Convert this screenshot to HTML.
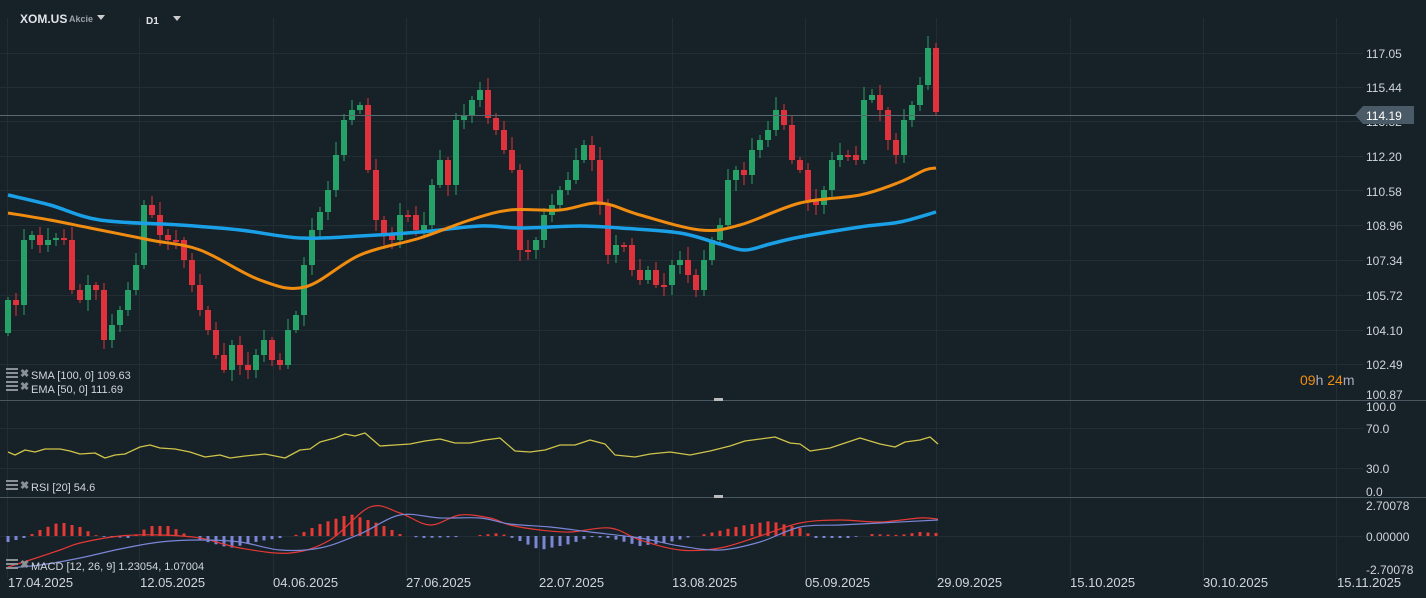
<!DOCTYPE html><html><head><meta charset="utf-8"><style>
body{margin:0;background:#172128;width:1426px;height:598px;overflow:hidden;font-family:"Liberation Sans",sans-serif}
svg{position:absolute;left:0;top:0}
</style></head><body>
<svg id="s" width="1426" height="598" xmlns="http://www.w3.org/2000/svg" font-family="Liberation Sans, sans-serif"></svg>
<script>
const s=document.getElementById('s');let h='';
const L=(x1,y1,x2,y2,c,w=1)=>h+=`<line x1="${x1}" y1="${y1}" x2="${x2}" y2="${y2}" stroke="${c}" stroke-width="${w}"/>`;
const T=(x,y,t,c='#d0d6da',sz=12,a='start',wt='normal')=>h+=`<text x="${x}" y="${y}" fill="${c}" font-size="${sz}" text-anchor="${a}" font-weight="${wt}">${t}</text>`;
const G='#222d34';
[53,87,121,156,190,225,260,295,330,364,428,468,536].forEach(y=>L(0,y+.5,1363,y+.5,G));
[7,139,273,406,539,672,805,936,1070,1203,1336].forEach(x=>L(x+.5,18,x+.5,578,G));
L(0,400.5,1426,400.5,'#4a5660');L(0,497.5,1426,497.5,'#4a5660');
h+=`<rect x="714" y="398" width="9" height="3" fill="#bbb"/><rect x="714" y="495" width="9" height="3" fill="#bbb"/>`;
const ys=[300,305,240,235,245,240,238,240,290,300,285,290,340,325,310,290,265,205,215,235,240,240,260,285,310,330,355,370,345,365,370,355,340,360,365,330,315,265,230,212,190,155,120,110,105,170,220,235,240,215,215,230,225,185,160,185,120,115,100,90,118,130,150,170,250,250,240,215,205,190,180,160,145,160,205,255,245,245,270,280,270,285,285,265,260,275,290,260,240,225,180,170,175,150,140,130,110,125,160,170,200,205,190,160,155,155,160,100,95,110,140,155,120,105,85,48,112];
const SP=(936-8)/(ys.length-1);
let po=275;
ys.forEach((c,i)=>{const x=8+i*SP;const o=i==0?333:po;const up=c<o;const col=up?'#26a269':'#e0323c';
const t=Math.min(o,c),b=Math.max(o,c);const wk=3+((i*37)%11);const wb=3+((i*53)%9);
L(x,t-wk,x,b+wb,col);h+=`<rect x="${x-3}" y="${t}" width="6" height="${Math.max(2,b-t)}" fill="${col}"/>`;po=c;});
const P=(p,c,w)=>{let d=`M${p[0][0]},${p[0][1]}`;for(let i=0;i<p.length-1;i++){const p0=p[i-1]||p[i],p1=p[i],p2=p[i+1],p3=p[i+2]||p2;
d+=` C${p1[0]+(p2[0]-p0[0])/6},${p1[1]+(p2[1]-p0[1])/6} ${p2[0]-(p3[0]-p1[0])/6},${p2[1]-(p3[1]-p1[1])/6} ${p2[0]},${p2[1]}`;}
h+=`<path d="${d}" fill="none" stroke="${c}" stroke-width="${w}" stroke-linejoin="round"/>`;};
const PL=(pts,c,w)=>h+=`<polyline points="${pts.map(p=>p.join(',')).join(' ')}" fill="none" stroke="${c}" stroke-width="${w}" stroke-linejoin="round"/>`;
P([[8,195],[50,205],[100,220],[180,225],[240,230],[300,238],[360,236],[420,232],[480,226],[520,228],[580,226],[620,228],[680,233],[720,244],[745,250],[770,244],[800,237],[860,227],[900,222],[936,212]],'#1aa0e6',3.5);
P([[8,213],[50,220],[90,228],[150,240],[200,250],[260,280],[305,287],[360,255],[420,238],[470,220],[510,210],[560,210],[600,203],[640,215],[700,230],[740,225],[800,203],[860,195],[900,182],[925,170],[936,168]],'#f08c10',3);
L(0,115.5,1360,115.5,'#5a6870');
[[117.05,58],[115.44,92],[113.82,126],[112.20,161],[110.58,196],[108.96,230],[107.34,265],[105.72,300],[104.10,335],[102.49,369],[100.87,399]].forEach(([v,y])=>T(1366,y,v.toFixed(2)));
h+=`<rect x="1363" y="106" width="51" height="18" fill="#4a5a66"/><polygon points="1355,115 1363,106 1363,124" fill="#4a5a66"/>`;T(1366,120,'114.19','#fff',12);
[['100.0',411],['70.0',433],['30.0',473],['0.0',496],['2.70078',510],['0.00000',541],['-2.70078',574]].forEach(([v,y])=>T(1366,y,v));
h+=`<text x="1300" y="385" font-size="14" fill="#f08c10">09<tspan fill="#aab">h</tspan> 24<tspan fill="#aab">m</tspan></text>`;
PL([[8,452],[15,455],[25,450],[35,452],[45,449],[60,449],[70,451],[80,454],[95,453],[105,458],[115,455],[125,454],[140,447],[150,445],[160,448],[175,449],[190,452],[205,457],[220,455],[230,458],[245,456],[265,454],[275,456],[285,458],[300,450],[310,449],[320,442],[335,438],[345,434],[355,436],[365,433],[380,446],[395,445],[410,444],[425,441],[440,439],[455,443],[470,443],[485,440],[500,438],[515,451],[530,452],[545,450],[560,445],[575,445],[590,440],[605,444],[615,455],[635,457],[650,454],[670,452],[690,455],[710,451],[730,446],[745,441],[760,439],[775,437],[790,443],[800,444],[810,451],[830,448],[845,443],[860,438],[880,444],[895,447],[905,442],[920,440],[930,437],[938,444]],'#cfc44a',1.3);
const hk=[[8,-6],[24,-2],[40,6],[60,14],[80,9],[95,1],[105,-1],[130,-2],[150,10],[170,10],[185,2],[200,-4],[230,-12],[260,-5],[280,-2],[300,2],[320,12],[350,22],[380,12],[400,2],[420,-2],[460,-1],[500,3],[520,-5],[540,-14],[570,-8],[590,-1],[610,-2],[640,-10],[670,-6],[690,-1],[710,3],[740,10],[770,15],[800,8],[815,-2],[850,-2],[870,2],[900,1],[920,4],[936,3]];
const hv=x=>{for(let k=0;k<hk.length-1;k++){const[a,b]=hk[k],[c,d]=hk[k+1];if(x>=a&&x<=c)return b+(d-b)*(x-a)/(c-a);}return 0;};
for(let i=0;i<ys.length;i++){const x=8+i*SP,v=hv(x);const a=Math.abs(v);if(a<0.8)continue;h+=`<rect x="${x-1.5}" y="${v>0?536-v:536}" width="3" height="${a}" fill="${v>0?'#e53935':'#7b86d6'}"/>`;}
P([[8,567],[30,560],[60,550],[80,543],[120,536],[160,535],[200,538],[240,548],[290,553],[330,540],[370,507],[400,513],[430,525],[460,515],[490,518],[510,525],[540,530],[570,532],[610,528],[640,540],[680,550],[720,548],[760,536],[800,523],[840,520],[880,522],[920,518],[938,519]],'#e53935',1.2);
P([[8,568],[40,565],[80,558],[120,549],[160,542],[200,540],[240,542],[280,550],[320,548],[360,534],[400,515],[440,518],[480,518],[510,524],[550,527],[590,532],[640,538],[680,546],[720,550],[760,542],[800,527],[840,525],[880,523],[938,520]],'#7b86d6',1.2);
const ic=(x,y)=>h+=`<rect x="${x}" y="${y}" width="12" height="2" fill="#8a9298"/><rect x="${x}" y="${y+4}" width="12" height="2" fill="#8a9298"/><rect x="${x}" y="${y+8}" width="12" height="2" fill="#8a9298"/><text x="${x+14}" y="${y+9}" fill="#8a9298" font-size="11" font-weight="bold">✖</text>`;
ic(6,368);T(31,379,'SMA [100,  0] 109.63','#d0d6da',11);
ic(6,381);T(31,393,'EMA [50, 0] 111.69','#d0d6da',11);
ic(6,480);T(31,491,'RSI [20]  54.6','#d0d6da',11);
ic(6,559);T(31,570,'MACD [12, 26, 9] 1.23054,  1.07004','#d0d6da',11);
[['17.04.2025',8],['12.05.2025',140],['04.06.2025',273],['27.06.2025',406],['22.07.2025',539],['13.08.2025',672],['05.09.2025',805],['29.09.2025',937],['15.10.2025',1070],['30.10.2025',1203],['15.11.2025',1337]].forEach(([t,x])=>T(x,587,t,'#d0d6da',13));
T(20,23,'XOM.US','#e0e4e6',12,'start','bold');T(69,22,'Akcie','#9aa2a8',9,'start','bold');
h+=`<polygon points="97,15 105,15 101,20" fill="#ccc"/><polygon points="173,16 181,16 177,21" fill="#ccc"/>`;
T(146,24,'D1','#e0e4e6',10,'start','bold');
s.innerHTML=h;
</script></body></html>
